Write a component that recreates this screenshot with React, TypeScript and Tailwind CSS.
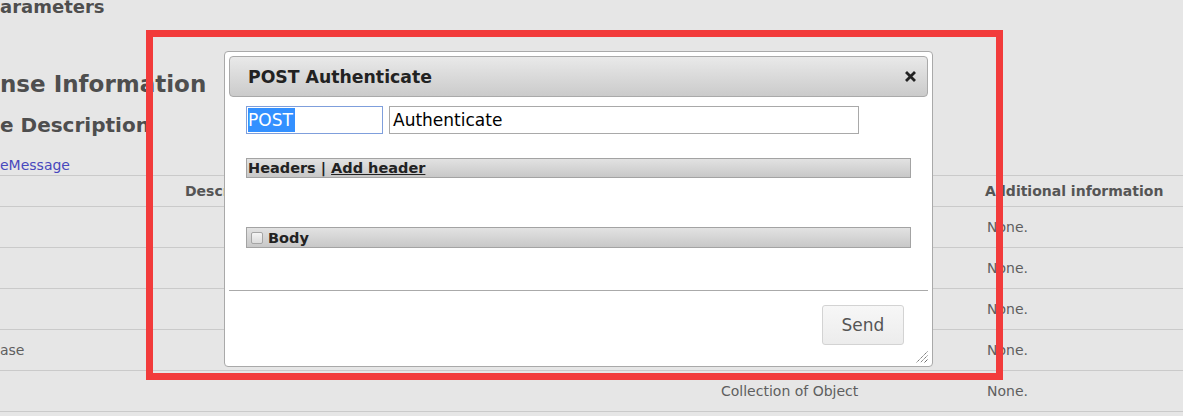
// background rows of the response table (dimmed behind the modal)
const rows = [
  { name: "", type: "", info: "None." },
  { name: "", type: "", info: "None." },
  { name: "", type: "", info: "None." },
  { name: "ase", type: "", info: "None." },
  { name: "", type: "Collection of Object", info: "None." },
];

function ResizeGrip() {
  return (
    <svg width="12" height="12" viewBox="0 0 12 12" className="absolute bottom-[3px] right-[4px]">
      <line x1="11.5" y1="0.5" x2="0.5" y2="11.5" stroke="#6f6f6f" strokeWidth="1" strokeDasharray="1.4 0.6" />
      <line x1="11.5" y1="4.5" x2="4.5" y2="11.5" stroke="#6f6f6f" strokeWidth="1" strokeDasharray="1.4 0.6" />
      <line x1="11.5" y1="8.5" x2="8.5" y2="11.5" stroke="#6f6f6f" strokeWidth="1" />
    </svg>
  );
}

function CloseIcon() {
  return (
    <svg width="11" height="11" viewBox="0 0 11 11">
      <path d="M2 2 L9 9 M9 2 L2 9" stroke="#222" strokeWidth="2.8" strokeLinecap="square" />
    </svg>
  );
}

function Dialog() {
  return (
    <div className="absolute left-[224px] top-[51px] flex h-[316px] w-[709px] flex-col rounded-[4px] border border-[#a9a9a9] bg-white p-[4px]">
      {/* title bar */}
      <div className="flex h-[41px] items-center justify-between rounded-[4px] border border-[#aaaaaa] bg-gradient-to-b from-[#e9e9e9] to-[#cbcbcb] pl-[18px] pr-[11px]">
        <span className="text-[17.3px] font-bold leading-[20px] text-[#222]">POST Authenticate</span>
        <CloseIcon />
      </div>

      {/* content */}
      <div className="flex flex-col px-[17px] pt-[9px] pb-[42px]">
        <div className="flex gap-[6px]">
          <div className="flex h-[28px] w-[137px] items-center border border-[#7f9fdc] pl-[1px] text-[17px] leading-[24px]">
            <span className="bg-[#3390ff] pr-[2px] text-white">POST</span>
          </div>
          <div className="flex h-[28px] w-[470px] items-center border border-[#a9a9a9] pl-[3px] text-[17px] leading-[24px] text-black">
            Authenticate
          </div>
        </div>

        <div className="mt-[24px] flex h-[20px] w-[665px] items-center border border-[#a3a3a3] bg-gradient-to-b from-[#e2e2e2] to-[#c8c8c8] pl-[1px] text-[14.5px] font-bold leading-[18px] text-[#222]">
          <span>Headers</span>
          <span className="mx-[5px]">|</span>
          <span className="underline">Add header</span>
        </div>

        <div className="mt-[49px] flex h-[21px] w-[665px] items-center border border-[#a3a3a3] bg-gradient-to-b from-[#e2e2e2] to-[#c8c8c8] pl-[4px] pt-[1px] text-[14.5px] font-bold leading-[18px] text-[#222]">
          <span className="mr-[5px] h-[12px] w-[12px] rounded-[2px] border border-[#a5a5a5] bg-gradient-to-b from-[#f4f4f4] to-[#dcdcdc]" />
          <span>Body</span>
        </div>
      </div>

      {/* button pane */}
      <div className="relative flex flex-1 justify-end border-t border-[#aaaaaa] pt-[14px] pr-[24px]">
        <button className="h-[40px] w-[82px] rounded-[3px] border border-[#d3d3d3] bg-gradient-to-b from-[#f7f7f7] to-[#ececec] pt-[2px] text-[17px] text-[#555]">
          Send
        </button>
      </div>
      <ResizeGrip />
    </div>
  );
}

export default function App() {
  return (
    <div className="relative h-[416px] w-[1183px] overflow-hidden bg-[#e6e6e6] font-['DejaVu_Sans',sans-serif]">
      {/* page behind the overlay */}
      <div className="text-[#4e4e4e]">
        <h3 className="-mt-[5px] text-[18px] font-bold leading-[24px]">arameters</h3>
        <h2 className="mt-[51px] text-[23px] font-bold leading-[28px]">nse Information</h2>
        <h3 className="mt-[15px] text-[20px] font-bold leading-[24px]">e Description</h3>
        <div className="mt-[19px] text-[14px] leading-[18px] text-[#4848bd]">eMessage</div>

        <div className="mt-[1px] border-t border-[#cacaca] text-[14px] leading-[17px]">
          <div className="grid h-[31px] grid-cols-[177px_536px_264px_1fr] items-center border-b border-[#cacaca] font-bold text-[#555]">
            <div />
            <div className="pl-[8px]">Description</div>
            <div className="pl-[8px]">Type</div>
            <div className="pl-[8px]">Additional information</div>
          </div>
          {rows.map((r, i) => (
            <div
              key={i}
              className="grid h-[41px] grid-cols-[177px_536px_264px_1fr] items-center border-b border-[#cacaca] text-[#5e5e5e]"
            >
              <div>{r.name}</div>
              <div />
              <div className="pl-[8px]">{r.type}</div>
              <div className="pl-[10px]">{r.info}</div>
            </div>
          ))}
        </div>
      </div>

      <Dialog />

      {/* red annotation frame */}
      <div className="absolute left-[146px] top-[30px] h-[350px] w-[857px] border-[7px] border-[#f23b3b]" />
    </div>
  );
}
